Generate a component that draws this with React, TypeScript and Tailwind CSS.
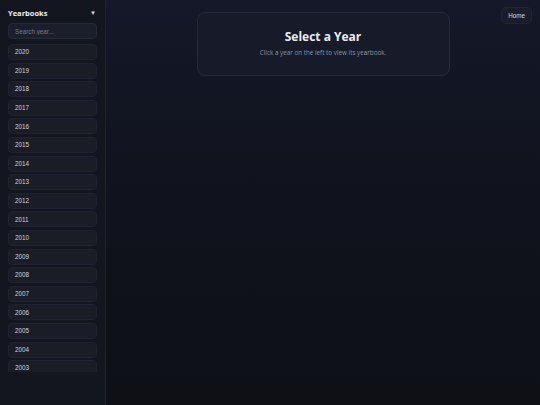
import React from "react"

const years = Array.from({ length: 18 }, (_, i) => String(2020 - i))

export default function App() {
  return (
    <div className="flex h-[405px] w-full overflow-hidden bg-[#0f121b] font-['Liberation_Sans',Arial,sans-serif]">
      <aside className="flex w-[106px] shrink-0 flex-col border-r border-[#1e2230] bg-[#13161f]">
        <div className="flex h-[23px] items-start justify-between pl-[8px] pr-[9px] pt-[8px]">
          <span className="font-['Open_Sans',sans-serif] text-[7.5px] font-bold leading-[10px] text-[#eef0f5]">Yearbooks</span>
          <span className="text-[6px] leading-[10px] text-[#d8dbe3]">▼</span>
        </div>
        <div className="px-[8px]">
          <input
            placeholder="Search year..."
            className="block h-[16px] w-full rounded-[4px] border border-[#262a38] bg-[#1b1f2b] px-[6px] text-[6.3px] text-[#c9ccd6] placeholder:text-[#767b8b] outline-none"
          />
        </div>
        <div className="mt-[5px] h-[328px] overflow-hidden px-[8px]">
          {years.map((y) => (
            <div
              key={y}
              className="mb-[2.6px] flex h-[16px] items-center rounded-[4px] border border-[#1f2230] bg-[#1a1c26] pl-[6px] text-[6.3px] text-[#d2d5dd]"
            >
              {y}
            </div>
          ))}
        </div>
      </aside>
      <main className="relative flex-1 bg-gradient-to-b from-[#141828] via-[#10131d] to-[#0e1016]">
        <div className="flex justify-center pt-[12px]">
          <div className="flex h-[64px] w-[253px] flex-col items-center justify-center rounded-[8px] border border-[#252a3a] bg-[#171b29] font-['Open_Sans',sans-serif]">
            <h1 className="text-[12px] font-bold leading-none text-[#e9ebf2]">Select a Year</h1>
            <p className="mt-[7px] text-[6.3px] leading-none text-[#8c91a2]">Click a year on the left to view its yearbook.</p>
          </div>
        </div>
        <button className="absolute right-[8px] top-[7px] h-[17px] rounded-[5px] border border-[#222634] bg-[#1a1d29] px-[6px] text-[6.3px] text-[#d4d7df]">
          Home
        </button>
      </main>
    </div>
  )
}
